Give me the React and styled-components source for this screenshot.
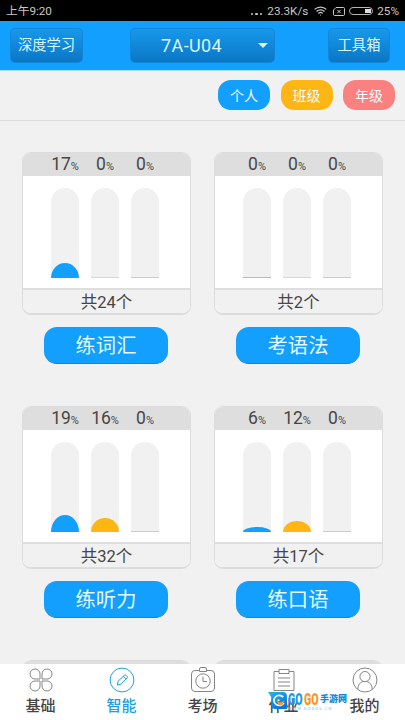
import styled, { createGlobalStyle } from "styled-components";

const GlobalStyle = createGlobalStyle`
  * {
    box-sizing: border-box;
  }
  body {
    margin: 0;
    background: #f1f1f1;
    font-family: Roboto, "Noto Sans CJK SC", sans-serif;
  }
  button {
    font-family: inherit;
    border: none;
    padding: 0;
  }
`;

const BLUE = "#129ffd";
const YELLOW = "#fdb614";
const PINK = "#fb8080";

const filters = [
  { label: "个人", color: BLUE },
  { label: "班级", color: YELLOW },
  { label: "年级", color: PINK },
];

const skills = [
  { name: "练词汇", total: 24, values: [17, 0, 0] },
  { name: "考语法", total: 2, values: [0, 0, 0] },
  { name: "练听力", total: 32, values: [19, 16, 0] },
  { name: "练口语", total: 17, values: [6, 12, 0] },
];

const tabs = [
  { label: "基础", Icon: CloverIcon },
  { label: "智能", Icon: PencilIcon, active: true },
  { label: "考场", Icon: ClockIcon },
  { label: "作业", Icon: ClipboardIcon },
  { label: "我的", Icon: UserIcon },
];

export default function App() {
  return (
    <Screen>
      <GlobalStyle />
      <StatusBar>
        <span>上午9:20</span>
        <StatusRight>
          <Dots>
            <i />
            <i />
            <i />
          </Dots>
          <Speed>23.3K/s</Speed>
          <WifiIcon />
          <SimIcon />
          <Battery />
          <span>25%</span>
        </StatusRight>
      </StatusBar>
      <Header>
        <HeaderButton $width={73}>深度学习</HeaderButton>
        <UnitSelect $width={145}>
          7A-U04
          <Caret />
        </UnitSelect>
        <HeaderButton $width={62}>工具箱</HeaderButton>
      </Header>
      <Filters>
        {filters.map((f) => (
          <Pill key={f.label} $color={f.color}>
            {f.label}
          </Pill>
        ))}
      </Filters>
      <Content>
        {skills.map((skill) => (
          <Skill key={skill.name} item={skill} />
        ))}
        <Card>
          <CardHead />
        </Card>
        <Card>
          <CardHead />
        </Card>
      </Content>
      <TabBar>
        {tabs.map(({ label, Icon, active }) => (
          <Tab key={label} $active={active}>
            <Icon />
            <span>{label}</span>
          </Tab>
        ))}
        <Watermark />
      </TabBar>
    </Screen>
  );
}

function Skill({ item }) {
  const colors = [BLUE, YELLOW, PINK];
  return (
    <SkillBox>
      <Card>
        <CardHead>
          {item.values.map((v, i) => (
            <Percent key={i}>
              {v}
              <small>%</small>
            </Percent>
          ))}
        </CardHead>
        <Bars>
          {item.values.map((v, i) => (
            <Bar key={i}>
              <Fill
                $color={colors[i]}
                $empty={v === 0}
                style={{ height: v === 0 ? 1 : Math.round(v * 0.88) }}
              />
            </Bar>
          ))}
        </Bars>
        <CardFoot>共{item.total}个</CardFoot>
      </Card>
      <SkillButton>{item.name}</SkillButton>
    </SkillBox>
  );
}

function Watermark() {
  return (
    <Mark>
      <svg width="20" height="19" viewBox="0 0 19 19" preserveAspectRatio="none">
        <defs>
          <linearGradient id="mark" x1="0" y1="0" x2="0.6" y2="1">
            <stop offset="0" stopColor="#27b6ee" />
            <stop offset="1" stopColor="#0876d0" />
          </linearGradient>
        </defs>
        <path d="M0 1h14q4 0 4 4v13H7q-4 0-4-4V6z" fill="url(#mark)" />
        <path
          d="M14.5 6.2A5 5 0 1 0 15 12"
          fill="none"
          stroke="#e8f8ff"
          strokeWidth="1.7"
        />
        <path d="M8 9.5l3 2 4.5-1.5-2 4-3 .5z" fill="#ff9a1f" />
        <circle cx="10" cy="9.3" r="1" fill="#fff" />
      </svg>
      <MarkWords>
        <MarkName>
          <b>GO</b>
          <b>GO</b>
          <span>手游网</span>
        </MarkName>
        <MarkUrl>WWW.GOGO6.CN</MarkUrl>
      </MarkWords>
    </Mark>
  );
}

/* icons */

function WifiIcon() {
  return (
    <svg width="13" height="10" viewBox="0 0 13 10" fill="none" stroke="#c8c8c8" strokeWidth="1.3">
      <path d="M.6 3.4a8.6 8.6 0 0 1 11.8 0M2.5 5.5a5.8 5.8 0 0 1 8 0M4.4 7.4a3.1 3.1 0 0 1 4.2 0" />
      <circle cx="6.5" cy="9" r=".6" fill="#c8c8c8" stroke="none" />
    </svg>
  );
}

function SimIcon() {
  return (
    <svg width="12" height="9" viewBox="0 0 12 9" fill="none" stroke="#c8c8c8">
      <path d="M3 .5h7.5q1 0 1 1v6q0 1-1 1h-9q-1 0-1-1V3z" />
      <path d="M4.3 2.8l3.4 3.4M7.7 2.8L4.3 6.2" />
    </svg>
  );
}

function LineSvg({ children }) {
  return (
    <svg width="28" height="28" viewBox="0 0 28 28" fill="none" stroke="currentColor" strokeWidth="1">
      {children}
    </svg>
  );
}

function CloverIcon() {
  return (
    <LineSvg>
      <path d="M13 13H8A5 5 0 1 1 13 8zM15 13V8a5 5 0 1 1 5 5zM13 15v5a5 5 0 1 1-5-5zM15 15h5a5 5 0 1 1-5 5z" />
    </LineSvg>
  );
}

function PencilIcon() {
  return (
    <LineSvg>
      <circle cx="14" cy="14" r="11.9" />
      <path d="M9.4 19.1l.7-3.9 6.4-6q.8-.6 1.6.1l1 1q.7.8 0 1.6l-6 6.2zM15.4 10.2l2.8 2.8" />
    </LineSvg>
  );
}

function ClockIcon() {
  return (
    <LineSvg>
      <path d="M10.5 4.5H6q-3.5 0-3.5 3.5v14q0 3.5 3.5 3.5h16q3.5 0 3.5-3.5V8q0-3.5-3.5-3.5h-4.5" />
      <path d="M10.5 5.5V3q0-1.5 1.5-1.5h4q1.5 0 1.5 1.5v2.5z" />
      <circle cx="14" cy="15" r="7.2" />
      <path d="M14 10.5v5h4" />
    </LineSvg>
  );
}

function ClipboardIcon() {
  return (
    <LineSvg>
      <path d="M9 5.5H4v19h20v-19h-5" />
      <path d="M9 3.5h10v4H9zM8 12h12M8 16h12M8 20h12" />
    </LineSvg>
  );
}

function UserIcon() {
  return (
    <LineSvg>
      <circle cx="14" cy="14" r="12" />
      <circle cx="14" cy="10.6" r="5.1" />
      <path d="M6.8 23q.4-6 5-7.4M21.2 23q-.4-6-5-7.4" />
    </LineSvg>
  );
}

const Screen = styled.div`
  width: 405px;
  height: 720px;
  display: flex;
  flex-direction: column;
  overflow: hidden;
  background: #f1f1f1;
`;

const StatusBar = styled.div`
  flex: none;
  height: 21px;
  padding: 1px 6px 0 6px;
  display: flex;
  justify-content: space-between;
  align-items: center;
  background: #000;
  color: #c8c8c8;
  font-size: 11.7px;
  line-height: 20px;
`;

const StatusRight = styled.div`
  display: flex;
  align-items: center;
  svg {
    flex: none;
  }
`;

const Dots = styled.span`
  display: flex;
  gap: 2px;
  padding-top: 6px;
  margin-right: 5px;
  i {
    width: 2.5px;
    height: 2.5px;
    border-radius: 50%;
    background: #c8c8c8;
  }
`;

const Speed = styled.span`
  margin-right: 6px;
  & + svg {
    margin-right: 6px;
  }
`;

const Battery = styled.span`
  flex: none;
  width: 24px;
  height: 8px;
  margin: 0 4px 0 4px;
  border: 1px solid #b5b5b5;
  border-radius: 4px;
  background: linear-gradient(#ddd, #ddd) 15px 1px / 6px 4px no-repeat;
`;

const Header = styled.div`
  flex: none;
  height: 50px;
  padding: 7px 15px 0 10px;
  display: flex;
  justify-content: space-between;
  align-items: flex-start;
  background: ${BLUE};
  border-bottom: 1px solid #a5e2fb;
`;

const HeaderButton = styled.button`
  width: ${(p) => p.$width}px;
  height: 35px;
  padding-bottom: 4px;
  border: 1px solid #1287d8;
  border-radius: 5px;
  background: linear-gradient(#1798ec, #0b77c4);
  color: #d9f6ff;
  font-size: 14.3px;
  font-weight: 400;
  white-space: nowrap;
`;

const UnitSelect = styled(HeaderButton)`
  display: flex;
  align-items: center;
  padding: 0 6px 1px 30px;
  margin-right: 6px;
  justify-content: space-between;
  font-size: 18px;
  letter-spacing: 0.4px;
`;

const Caret = styled.i`
  border: 5px solid transparent;
  border-top-color: #d9f6ff;
  border-bottom: none;
`;

const Filters = styled.div`
  flex: none;
  height: 50px;
  padding: 9px 10px 0 0;
  display: flex;
  justify-content: flex-end;
  gap: 10.5px;
  border-bottom: 1px solid #dedede;
`;

const Pill = styled.button`
  width: 52px;
  height: 30px;
  border-radius: 13px;
  background: ${(p) => p.$color};
  color: #f4fbff;
  font-size: 14px;
`;

const Content = styled.div`
  flex: 1;
  min-height: 0;
  padding: 31px 22px 0;
  display: grid;
  grid-template-columns: 169px 169px;
  grid-auto-rows: 254px;
  column-gap: 23px;
  overflow: hidden;
`;

const SkillBox = styled.div`
  display: flex;
  flex-direction: column;
`;

const Card = styled.div`
  width: 169px;
  height: 163px;
  display: flex;
  flex-direction: column;
  border: 1px solid #dcdcdc;
  border-bottom-width: 2px;
  border-radius: 9px;
  overflow: hidden;
  background: #fff;
`;

const Triple = styled.div`
  display: grid;
  grid-template-columns: repeat(3, 40px);
  justify-content: center;
  justify-items: center;
  padding-right: 4px;
`;

const CardHead = styled(Triple)`
  height: 23px;
  background: #dedede;
`;

const Percent = styled.span`
  color: #464646;
  font-size: 17.5px;
  line-height: 23px;
  white-space: nowrap;
  padding-left: 1px;
  small {
    font-size: 11px;
  }
`;

const Bars = styled(Triple)`
  flex: 1;
  padding-top: 12px;
`;

const Bar = styled.div`
  width: 28px;
  height: 90px;
  display: flex;
  align-items: flex-end;
  border-radius: 14px 14px 0 0;
  background: #f1f1f1;
`;

const Fill = styled.div`
  width: 100%;
  border-radius: ${(p) => (p.$empty ? "0" : "50% 50% 0 0 / 100% 100% 0 0")};
  background: ${(p) => p.$color};
  opacity: ${(p) => (p.$empty ? 0.5 : 1)};
`;

const CardFoot = styled.div`
  height: 25px;
  border-top: 2px solid #dedede;
  background: #f1f1f1;
  color: #464646;
  font-size: 16.5px;
  line-height: 25px;
  text-align: center;
`;

const SkillButton = styled.button`
  width: 124px;
  height: 37px;
  margin: 12px 0 0 22px;
  padding-top: 2px;
  border-radius: 13px;
  border-bottom: 1px solid #1583df;
  background: ${BLUE};
  color: #e2fbff;
  font-size: 20.3px;
  line-height: 34px;
`;

const TabBar = styled.div`
  position: relative;
  flex: none;
  height: 56px;
  display: flex;
  background: #fff;
`;

const Tab = styled.div`
  flex: 1;
  padding-top: 2px;
  display: flex;
  flex-direction: column;
  align-items: center;
  color: ${(p) => (p.$active ? "#1c9fdf" : "#858585")};
  span {
    color: ${(p) => (p.$active ? "#1c9fdf" : "#444")};
    font-size: 15px;
    font-weight: 500;
    line-height: 24px;
  }
`;

/* sits on top of the tab labels */
const Mark = styled.div`
  position: absolute;
  left: 268px;
  top: 27px;
  display: flex;
`;

const MarkWords = styled.div`
  display: flex;
  flex-direction: column;
`;

const MarkName = styled.div`
  display: flex;
  align-items: center;
  height: 15px;
  margin-top: 1px;
  line-height: 15px;
  white-space: nowrap;
  b {
    width: 16px;
    font-size: 17px;
    font-weight: 900;
    transform: scaleX(0.62);
    transform-origin: left;
    color: #139be6;
  }
  b + b {
    color: #ff9420;
  }
  span {
    font-size: 9px;
    font-weight: 900;
    color: #128bdd;
  }
`;

const MarkUrl = styled.div`
  font-size: 4px;
  line-height: 4px;
  letter-spacing: 1.1px;
  color: #7cc3ee;
`;
